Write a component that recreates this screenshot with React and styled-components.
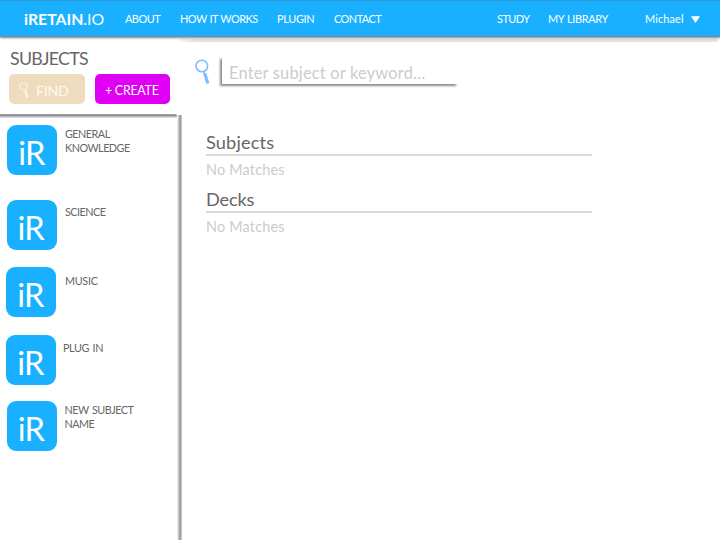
import React from "react";
import styled, { createGlobalStyle } from "styled-components";

const GlobalStyle = createGlobalStyle`
  * { box-sizing: border-box; }
  body { margin: 0; background: #fff; overflow: hidden; }
  h1, h2, p { margin: 0; font-weight: 400; }
  button, input { font: inherit; border: 0; padding: 0; margin: 0; }
`;

const Page = styled.div`
  width: 720px;
  height: 540px;
  display: flex;
  flex-direction: column;
  overflow: hidden;
  background: #fff;
  font-family: Lato, Carlito, "Open Sans", sans-serif;
  color: #666;
`;

const Header = styled.header`
  height: 37px;
  flex: none;
  display: flex;
  align-items: center;
  padding: 2px 20px 0 24px;
  background: #19b1ff;
  border-top: 1px solid #3296dc;
  border-bottom: 2px solid #4b9bd2;
  box-shadow: 0 1px 2px rgba(0, 0, 0, 0.5);
  color: #fff;
  white-space: nowrap;
  z-index: 2;
`;

const Brand = styled.div`
  width: 101px;
  font-size: 15.8px;
  line-height: 20px;
  b { font-weight: 700; }
`;

const NavItem = styled.a`
  width: ${(p) => p.$width}px;
  font-size: 10.9px;
  line-height: 16px;
  letter-spacing: ${(p) => p.$spacing ?? -0.5}px;
  word-spacing: 0.6px;
  margin-left: ${(p) => (p.$push ? "auto" : 0)};
`;

const Caret = styled.svg`
  width: 9px;
  height: 7px;
  display: block;
`;

const Body = styled.div`
  flex: 1;
  display: flex;
  min-height: 0;
`;

const Sidebar = styled.aside`
  width: 182px;
  flex: none;
  display: flex;
  flex-direction: column;
`;

const SidebarTop = styled.div`
  height: 78px;
  flex: none;
  padding: 11px 0 0 10px;
  background: #fff;
`;

const SidebarRule = styled.div`
  height: 4px;
  flex: none;
  margin: -1px 5px -3px 0;
  border-radius: 0 2px 2px 0;
  background: linear-gradient(#aaa, #8e8e8e 35%, #b9b9b9 65%, #f1f1f1);
  z-index: 1;
`;

const Title = styled.h1`
  font-size: 17.8px;
  line-height: 20px;
  height: 22px;
  letter-spacing: -0.7px;
`;

const Actions = styled.div`
  display: flex;
  gap: 10px;
  margin: 4px 0 0 -1px;
`;

const Action = styled.button`
  width: ${(p) => p.$width}px;
  height: 30px;
  display: flex;
  align-items: center;
  padding: 3px 0 0 10px;
  gap: 7px;
  border-radius: 5px;
  background: ${(p) => p.$color};
  color: ${(p) => p.$ink || "#fff"};
  font-size: ${(p) => p.$size}px;
  line-height: 18px;
  letter-spacing: -0.25px;
  white-space: nowrap;
`;

const LensSvg = styled.svg`
  width: ${(p) => p.$width}px;
  height: ${(p) => p.$height}px;
  flex: none;
  margin-top: ${(p) => p.$lift || 0}px;
`;

const SubjectList = styled.div`
  flex: 1;
  background: linear-gradient(to right, #f6f6f6, #dedede 22%, #a8a8a8 45%, #a2a2a2 72%, #d5d5d5) right top / 5px 100% no-repeat;
  padding-top: 9.5px;
`;

const Subject = styled.div`
  height: ${(p) => p.$height}px;
  padding-left: ${(p) => p.$indent}px;
  display: flex;
  align-items: flex-start;
`;

const Tile = styled.div`
  width: 50px;
  height: 50px;
  flex: none;
  display: flex;
  justify-content: center;
  padding: 9px 2px 0 0;
  border-radius: 9px;
  background: #19b1ff;
  color: #fff;
  font-size: 32.5px;
  line-height: 38px;
  letter-spacing: -0.8px;
`;

const SubjectName = styled.div`
  width: 90px;
  margin-left: ${(p) => p.$gap}px;
  margin-top: ${(p) => p.$top}px;
  font-size: 10.8px;
  line-height: 14px;
  letter-spacing: ${(p) => p.$spacing ?? -0.5}px;
  word-spacing: 1.2px;
`;

const Main = styled.main`
  flex: 1;
  padding: 2px 2px 0 0;
`;

const Strip = styled.div`
  height: 3px;
  margin-left: -3px;
  background: linear-gradient(to right, #f6f6f6, #e2e2e2 16px);
  border-radius: 2px;
`;

const SearchRow = styled.label`
  display: flex;
  align-items: center;
  padding: 16px 0 0 13px;
  height: 43px;
`;

const SearchInput = styled.input`
  width: 236px;
  height: 27px;
  margin: -3px 0 0 12px;
  padding: 4px 0 0 7px;
  background: #fff;
  box-shadow: -2px 2px 2px rgba(0, 0, 0, 0.45);
  outline: none;
  font-size: 16.4px;
  letter-spacing: 0.2px;
  &::placeholder { color: #ccc; opacity: 1; }
`;

const Results = styled.div`
  width: 386px;
  margin: 48px 0 0 24px;
`;

const Group = styled.section`
  height: 57px;
`;

const GroupTitle = styled.h2`
  height: 23px;
  font-size: 18.2px;
  line-height: 19px;
  border-bottom: 2px solid #dadada;
  letter-spacing: ${(p) => p.$spacing || 0}px;
`;

const Empty = styled.p`
  margin-top: 4px;
  font-size: 14.4px;
  line-height: 19px;
  letter-spacing: 0.2px;
  color: #ccc;
`;

function Lens({ width, height, color, stroke, lift }) {
  return (
    <LensSvg $width={width} $height={height} $lift={lift} viewBox="0 0 15 25" fill="none">
      <circle cx="6.8" cy="7" r="5.8" stroke={color} strokeWidth={stroke} />
      <path d="M8.6 12.5 L10 16" stroke={color} strokeWidth="1.8" />
      <path d="M9.7 14.5 L12.9 24.5" stroke={color} strokeWidth="3.2" />
    </LensSvg>
  );
}

const subjects = [
  { name: "GENERAL KNOWLEDGE", indent: 7.4, height: 75, gap: 7.6, top: 2.5 },
  { name: "SCIENCE", indent: 6.6, height: 67.5, gap: 8.4, top: 5.5 },
  { name: "MUSIC", indent: 6.4, height: 67.5, gap: 8.6, top: 7, spacing: -0.3 },
  { name: "PLUG IN", indent: 6.4, height: 66.5, gap: 6.6, top: 6.5, spacing: -0.4 },
  { name: "NEW SUBJECT NAME", indent: 6.8, height: 60, gap: 7.7, top: 2 },
];

export default function App() {
  return (
    <Page>
      <GlobalStyle />
      <Header>
        <Brand><b>iRETAIN</b>.IO</Brand>
        <NavItem $width={55}>ABOUT</NavItem>
        <NavItem $width={97}>HOW IT WORKS</NavItem>
        <NavItem $width={57} $spacing={-0.3}>PLUGIN</NavItem>
        <NavItem $width={60}>CONTACT</NavItem>
        <NavItem $width={51} $push>STUDY</NavItem>
        <NavItem $width={97} $spacing={-0.3}>MY LIBRARY</NavItem>
        <NavItem $width={46} $spacing={0.15}>Michael</NavItem>
        <Caret viewBox="0 0 9 7"><path d="M0 0.3H9L4.5 7Z" fill="#fff" /></Caret>
      </Header>
      <Body>
        <Sidebar>
          <SidebarTop>
            <Title>SUBJECTS</Title>
            <Actions>
              <Action $width={76} $color="#efdcbf" $ink="#fff8ec" $size={14.2}>
                <Lens width={10} height={16} color="#fff8ec" stroke={1.5} lift={-2} />
                FIND
              </Action>
              <Action $width={75} $color="#df00f3" $size={12.4}>+ CREATE</Action>
            </Actions>
          </SidebarTop>
          <SidebarRule />
          <SubjectList>
            {subjects.map((s) => (
              <Subject key={s.name} $height={s.height} $indent={s.indent}>
                <Tile>iR</Tile>
                <SubjectName $gap={s.gap} $top={s.top} $spacing={s.spacing}>{s.name}</SubjectName>
              </Subject>
            ))}
          </SubjectList>
        </Sidebar>
        <Main>
          <Strip />
          <SearchRow>
            <Lens width={15} height={25} color="#80bbff" stroke={1.6} />
            <SearchInput placeholder="Enter subject or keyword…" />
          </SearchRow>
          <Results>
            <Group>
              <GroupTitle $spacing={0.15}>Subjects</GroupTitle>
              <Empty>No Matches</Empty>
            </Group>
            <Group>
              <GroupTitle $spacing={-0.2}>Decks</GroupTitle>
              <Empty>No Matches</Empty>
            </Group>
          </Results>
        </Main>
      </Body>
    </Page>
  );
}
